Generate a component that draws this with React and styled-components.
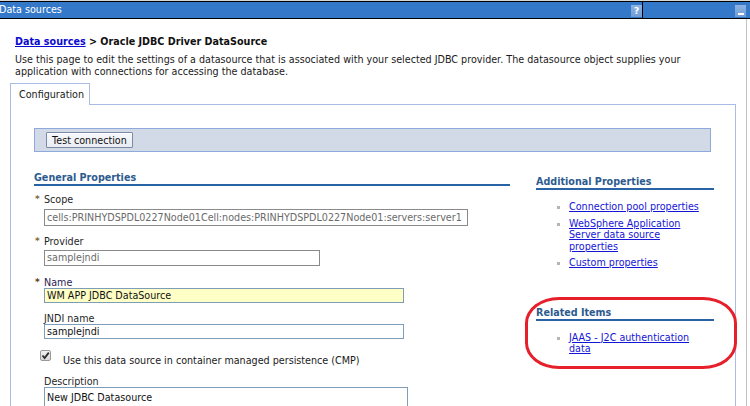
import React from 'react';
import styled, { createGlobalStyle } from 'styled-components';

const GlobalStyle = createGlobalStyle`
  html, body {
    margin: 0;
    padding: 0;
    background: #ffffff;
  }
  body {
    font-family: 'DejaVu Sans', Verdana, sans-serif;
    font-size: 9.6px;
    color: #1a1a1a;
  }
`;

const Page = styled.div`
  position: relative;
  width: 750px;
  height: 406px;
  overflow: hidden;
  padding-top: 1px;
  box-sizing: border-box;
  background: linear-gradient(#d6d6d6 0 1px, #ffffff 1px);
`;

const TitleBar = styled.div`
  display: flex;
  height: 16px;
  border-top: 1px solid #000;
  border-bottom: 1px solid #000;
  background: #3479c9;
  color: #ffffff;
`;

const TitleMain = styled.div`
  flex: 1;
  display: flex;
  align-items: center;
  justify-content: space-between;
  margin-left: -1px;
  border-right: 1px solid #000;
`;

const TitleSide = styled.div`
  width: 103px;
  display: flex;
  align-items: center;
  justify-content: flex-end;
  padding-right: 4px;
`;

const TitleText = styled.span`
  font-size: 9.6px;
  line-height: 16px;
`;

const TitleIcon = styled.span`
  width: 11px;
  height: 12px;
  margin-top: 2px;
  background: linear-gradient(#8db3e2, #6f9bd4);
  color: #ffffff;
  font-size: 9px;
  font-weight: bold;
  line-height: 12px;
  display: flex;
  align-items: flex-end;
  justify-content: center;
`;

const MinBar = styled.span`
  width: 6px;
  height: 2px;
  background: #ffffff;
  margin-bottom: 2px;
`;

const Body = styled.div`
  width: 747px;
  height: 388px;
  border-right: 1px solid #c3c3c3;
  box-sizing: border-box;
  padding-top: 17px;
`;

const Breadcrumb = styled.div`
  padding-left: 15px;
  font-weight: bold;
  line-height: 11px;
  color: #111;
`;

const Link = styled.a`
  color: ${(p) => (p.$strong ? '#0a0ad0' : '#1515d6')};
  text-decoration: underline;
  cursor: pointer;
`;

const Intro = styled.p`
  margin: 7px 0 0;
  padding-left: 15px;
  line-height: 12px;
  white-space: nowrap;
  color: #1a1a1a;
`;

const Tabs = styled.div`
  display: flex;
  padding-left: 10px;
  margin-top: 5px;
`;

const Tab = styled.div`
  position: relative;
  z-index: 1;
  width: 80px;
  height: 22px;
  margin-bottom: -1px;
  border: 1px solid #a9bde4;
  border-bottom: none;
  background: #ffffff;
  box-sizing: border-box;
  display: flex;
  align-items: center;
  padding-left: 8px;
`;

const Panel = styled.div`
  margin-left: 10px;
  width: 726px;
  height: 320px;
  border: 1px solid #a9bde4;
  border-bottom: none;
  box-sizing: border-box;
  padding: 23px 23px 0 23px;
`;

const ButtonBar = styled.div`
  width: 677px;
  height: 24px;
  box-sizing: border-box;
  border: 1px solid #8ea9db;
  background: #d3dae7;
  display: flex;
  align-items: center;
  padding-left: 11px;
`;

const Button = styled.button`
  height: 16px;
  padding: 0 5px;
  font-family: inherit;
  font-size: 9.6px;
  color: #111;
  background: linear-gradient(#f7f8fb, #e9ecf2);
  border: 1px solid #7d8aa3;
  border-radius: 1px;
  box-shadow: inset 0 1px 0 #ffffff;
`;

const Columns = styled.div`
  display: flex;
  gap: 26px;
  width: 680px;
`;

const LeftColumn = styled.div`
  width: 476px;
  padding-top: 20px;
`;

const RightColumn = styled.div`
  position: relative;
  width: 178px;
  padding-top: 24px;
`;

const SectionHeader = styled.div`
  font-weight: bold;
  color: #2d5b8f;
  line-height: 11px;
  padding-bottom: 1px;
  border-bottom: 2px solid #2a62a6;
  margin-top: ${(p) => p.$top ?? 0}px;
`;

const Field = styled.div`
  padding-left: 10px;
  margin-top: ${(p) => p.$top ?? 0}px;
`;

const Label = styled.div`
  position: relative;
  line-height: 11px;
  color: ${(p) => (p.$focus ? '#2c2150' : '#1f1f1f')};
`;

const Required = styled.span`
  position: absolute;
  left: -9px;
  top: 0;
  color: ${(p) => (p.$dark ? '#5a3d0f' : '#7b6a3a')};
  font-weight: bold;
  font-size: 9px;
`;

const Input = styled.div`
  width: ${(p) => p.$w}px;
  height: ${(p) => p.$h ?? 15}px;
  margin-top: ${(p) => p.$gap ?? 4}px;
  box-sizing: border-box;
  border: 1px solid ${(p) => (p.$disabled ? '#8a8a8a' : '#7f9db9')};
  background: ${(p) => (p.$yellow ? '#ffffc6' : '#ffffff')};
  color: ${(p) => (p.$disabled ? '#6a6a6a' : '#111')};
  padding-left: 2px;
  line-height: ${(p) => (p.$h ?? 15) - 2}px;
  white-space: nowrap;
  overflow: hidden;
`;

const CheckRow = styled.div`
  display: flex;
  align-items: flex-start;
  margin-top: 11px;
  padding-left: 6px;
`;

const CheckBox = styled.span`
  width: 11px;
  height: 11px;
  box-sizing: border-box;
  border: 1px solid #9a9a9a;
  border-radius: 2px;
  background: linear-gradient(#f2f2f2, #d9d9d9);
  display: flex;
  align-items: center;
  justify-content: center;
`;

const CheckLabel = styled.span`
  margin: 5px 0 0 12px;
  line-height: 11px;
`;

const LinkList = styled.ul`
  list-style: none;
  margin: ${(p) => p.$top ?? 10}px 0 0;
  padding: 0 0 0 21px;
`;

const LinkItem = styled.li`
  position: relative;
  padding-left: 12px;
  line-height: 11.5px;
  margin-bottom: 5px;
  white-space: nowrap;

  &::before {
    content: '';
    position: absolute;
    left: 0;
    top: 5px;
    width: 3px;
    height: 3px;
    background: #b5b5b5;
  }
`;

const Annotation = styled.div`
  position: absolute;
  left: -11px;
  top: 145px;
  width: 212px;
  height: 72px;
  box-sizing: border-box;
  border: 3px solid #e6202a;
  border-radius: 34px / 26px;
  pointer-events: none;
`;

function Check() {
  return (
    <svg width="9" height="9" viewBox="0 0 9 9">
      <path d="M1.5 4.5 L3.6 7 L7.8 1.6" fill="none" stroke="#2b2b2b" strokeWidth="1.8" />
    </svg>
  );
}

export default function App() {
  return (
    <>
      <GlobalStyle />
      <Page>
        <TitleBar>
          <TitleMain>
            <TitleText>Data sources</TitleText>
            <TitleIcon>?</TitleIcon>
          </TitleMain>
          <TitleSide>
            <TitleIcon>
              <MinBar />
            </TitleIcon>
          </TitleSide>
        </TitleBar>
        <Body>
          <Breadcrumb>
            <Link $strong>Data sources</Link> &gt; Oracle JDBC Driver DataSource
          </Breadcrumb>
          <Intro>
            Use this page to edit the settings of a datasource that is associated with your selected JDBC provider. The datasource object supplies your
            <br />
            application with connections for accessing the database.
          </Intro>
          <Tabs>
            <Tab>Configuration</Tab>
          </Tabs>
          <Panel>
            <ButtonBar>
              <Button>Test connection</Button>
            </ButtonBar>
            <Columns>
              <LeftColumn>
                <SectionHeader>General Properties</SectionHeader>
                <Field $top={8}>
                  <Label>
                    <Required>*</Required>Scope
                  </Label>
                  <Input $w={424} $h={17} $disabled>
                    cells:PRINHYDSPDL0227Node01Cell:nodes:PRINHYDSPDL0227Node01:servers:server1
                  </Input>
                </Field>
                <Field $top={10}>
                  <Label>
                    <Required>*</Required>Provider
                  </Label>
                  <Input $w={276} $h={16} $gap={3} $disabled>
                    samplejndi
                  </Input>
                </Field>
                <Field $top={11}>
                  <Label $focus>
                    <Required $dark>*</Required>Name
                  </Label>
                  <Input $w={360} $h={15} $gap={0} $yellow>
                    WM APP JDBC DataSource
                  </Input>
                </Field>
                <Field $top={10}>
                  <Label>JNDI name</Label>
                  <Input $w={360} $h={15} $gap={0}>
                    samplejndi
                  </Input>
                </Field>
                <CheckRow>
                  <CheckBox>
                    <Check />
                  </CheckBox>
                  <CheckLabel>Use this data source in container managed persistence (CMP)</CheckLabel>
                </CheckRow>
                <Field $top={10}>
                  <Label>Description</Label>
                  <Input $w={364} $h={22} $gap={0}>
                    New JDBC Datasource
                  </Input>
                </Field>
              </LeftColumn>
              <RightColumn>
                <SectionHeader>Additional Properties</SectionHeader>
                <LinkList $top={11}>
                  <LinkItem>
                    <Link>Connection pool properties</Link>
                  </LinkItem>
                  <LinkItem>
                    <Link>
                      WebSphere Application
                      <br />
                      Server data source
                      <br />
                      properties
                    </Link>
                  </LinkItem>
                  <LinkItem>
                    <Link>Custom properties</Link>
                  </LinkItem>
                </LinkList>
                <SectionHeader $top={38}>Related Items</SectionHeader>
                <LinkList $top={11}>
                  <LinkItem>
                    <Link>
                      JAAS - J2C authentication
                      <br />
                      data
                    </Link>
                  </LinkItem>
                </LinkList>
                <Annotation />
              </RightColumn>
            </Columns>
          </Panel>
        </Body>
      </Page>
    </>
  );
}
